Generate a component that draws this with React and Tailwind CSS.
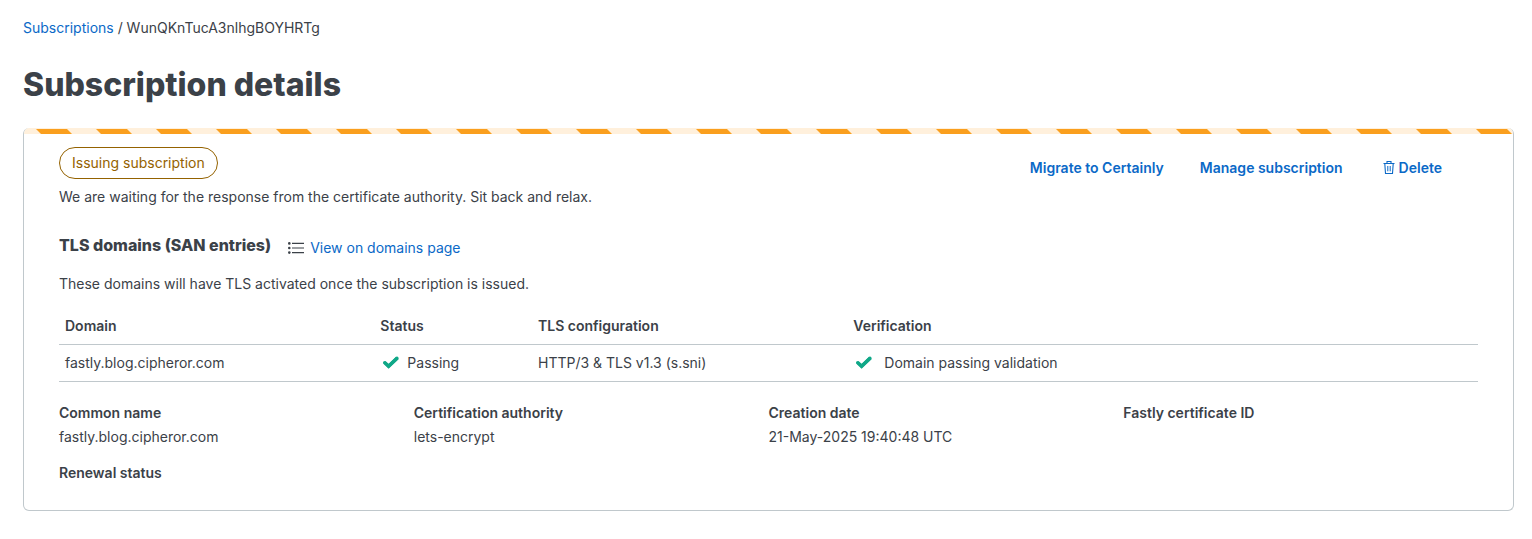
import React from "react";

const linkClass = "text-[#0b69c7] hover:underline";
const actionClass = "text-sm leading-6 font-semibold text-[#0b69c7] hover:underline";

function TrashIcon() {
  return (
    <svg className="h-[14px] w-3" viewBox="0 0 12 14" fill="none" stroke="currentColor" aria-hidden="true">
      <path d="M0.5 2.5H11.5M4 2.5V0.5H8V2.5M1.8 2.7L2.5 12.5H9.5L10.2 2.7" strokeWidth="1.1" />
      <path d="M4.8 5V10.3M7.2 5V10.3" strokeWidth="1" />
    </svg>
  );
}

function ListIcon() {
  return (
    <svg className="h-3 w-4" viewBox="0 0 16 12" fill="currentColor" aria-hidden="true">
      <circle cx="1.3" cy="1.4" r="1.3" />
      <circle cx="1.3" cy="6" r="1.3" />
      <circle cx="1.3" cy="10.6" r="1.3" />
      <path d="M4 0.8H16V2H4zM4 5.4H16V6.6H4zM4 10H16V11.2H4z" />
    </svg>
  );
}

function CheckIcon() {
  return (
    <svg className="h-[14px] w-4 shrink-0 text-[#10a888]" viewBox="0 0 16 14" fill="none" stroke="currentColor" aria-hidden="true">
      <path d="M1.3 6.2L5.6 10.2L14.4 1.9" strokeWidth="3.6" strokeLinecap="butt" strokeLinejoin="miter" />
      <path d="M1.6 6.5L5.6 10.2L14.1 2.2" strokeWidth="3" strokeLinecap="round" />
    </svg>
  );
}

function Check({ className, children }) {
  return (
    <span className={`flex items-center pl-[3px] ${className}`}>
      <CheckIcon />
      {children}
    </span>
  );
}

function Detail({ label, children }) {
  return (
    <div>
      <dt className="font-semibold">{label}</dt>
      <dd>{children}</dd>
    </div>
  );
}

export default function App() {
  return (
    <main className="px-[23px] pt-4 pr-[18px] pb-7 font-['Inter',sans-serif] text-sm leading-6 text-[#3b4148]">
      <nav aria-label="Breadcrumb">
        <a href="#subscriptions" className={linkClass}>Subscriptions</a> / WunQKnTucA3nlhgBOYHRTg
      </nav>
      <h1 className="mt-[25px] text-[32px] leading-10 font-extrabold">Subscription details</h1>

      <section className="mt-[23px] overflow-hidden rounded-md border border-t-0 border-[#c0c8cc]">
        <div className="bg-[#fff0dc] pt-px">
          <svg className="block h-[5px] w-full" aria-hidden="true">
            <defs>
              <pattern id="stripes" width="60" height="5" patternUnits="userSpaceOnUse">
                <path d="M12 0H43L48 5H17z" fill="#fa9f1e" />
              </pattern>
            </defs>
            <rect width="100%" height="5" fill="url(#stripes)" />
          </svg>
        </div>

        <div className="px-[35px] pt-[13px] pb-[25px]">
          <header className="flex items-start justify-between">
            <div>
              <span className="flex h-8 w-fit items-center rounded-full border border-[#946200] px-3 text-[#946200]">
                Issuing subscription
              </span>
              <p className="mt-1.5">We are waiting for the response from the certificate authority. Sit back and relax.</p>
            </div>
            <div className="mt-[9px] flex gap-9 pr-9">
              <button type="button" className={actionClass}>Migrate to Certainly</button>
              <button type="button" className={actionClass}>Manage subscription</button>
              <button type="button" className={`${actionClass} flex items-center gap-1 pl-1`}>
                <TrashIcon />
                Delete
              </button>
            </div>
          </header>

          <div className="mt-6 flex items-start">
            <h2 className="text-base leading-6 font-extrabold">TLS domains (SAN entries)</h2>
            <a href="#domains" className="ml-[17px] flex items-center gap-1.5 pt-[3px]">
              <ListIcon />
              <span className={linkClass}>View on domains page</span>
            </a>
          </div>
          <p className="mt-3">These domains will have TLS activated once the subscription is issued.</p>

          <table className="mt-3 w-full table-fixed text-left">
            <thead>
              <tr className="border-b border-[#c0c8cc]">
                <th scope="col" className="w-2/9 px-1.5 py-1.5 font-semibold">Domain</th>
                <th scope="col" className="w-1/9 px-1.5 py-1.5 font-semibold">Status</th>
                <th scope="col" className="w-2/9 px-1.5 py-1.5 font-semibold">TLS configuration</th>
                <th scope="col" className="w-4/9 px-1.5 py-1.5 font-semibold">Verification</th>
              </tr>
            </thead>
            <tbody>
              <tr className="border-b border-[#c0c8cc]">
                <td className="px-1.5 py-1.5">fastly.blog.cipheror.com</td>
                <td className="px-1.5 py-1.5"><Check className="gap-2">Passing</Check></td>
                <td className="px-1.5 py-1.5">HTTP/3 &amp; TLS v1.3 (s.sni)</td>
                <td className="px-1.5 py-1.5"><Check className="gap-3">Domain passing validation</Check></td>
              </tr>
            </tbody>
          </table>

          <dl className="mt-[19px] grid grid-cols-4 gap-y-3">
            <Detail label="Common name">fastly.blog.cipheror.com</Detail>
            <Detail label="Certification authority">lets-encrypt</Detail>
            <Detail label="Creation date">21-May-2025 19:40:48 UTC</Detail>
            <Detail label="Fastly certificate ID" />
            <Detail label="Renewal status" />
          </dl>
        </div>
      </section>
    </main>
  );
}
